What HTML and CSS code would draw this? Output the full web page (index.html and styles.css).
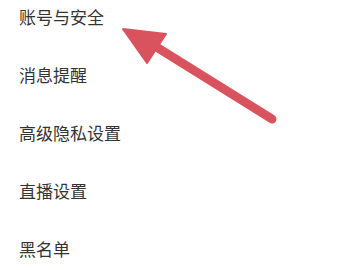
FILE: index.html
```html
<!DOCTYPE html>
<html>
    <head>
        <title>设置</title>
        <link rel="stylesheet" href="styles.css">
    </head>
    <body>
        <div class="settings-list">
            <div class="settings-row">账号与安全</div>
            <div class="settings-row">消息提醒</div>
            <div class="settings-row">高级隐私设置</div>
            <div class="settings-row">直播设置</div>
            <div class="settings-row">黑名单</div>
        </div>

        <svg class="pointer-arrow" width="358" height="270" viewBox="0 0 358 270">
            <line x1="272" y1="119" x2="150" y2="43" stroke="#d9535f" stroke-width="9" stroke-linecap="round"/>
            <polygon points="123,29 166,34 147,63" fill="#d9535f" stroke="#d9535f" stroke-width="2" stroke-linejoin="round"/>
        </svg>
    </body>
</html>
```

FILE: styles.css
```css
body {
    margin: 0;
    background-color: white;
    color: #333333;
    font-family: "Noto Sans CJK SC", "Noto Sans", sans-serif;
    overflow: hidden;
}

.settings-list {
    margin-top: -13px;
    display: flex;
    flex-direction: column;
}

.settings-row {
    height: 58px;
    padding-left: 19px;
    display: flex;
    align-items: center;
    font-size: 17px;
}

.pointer-arrow {
    position: absolute;
    top: 0;
    left: 0;
}
```
